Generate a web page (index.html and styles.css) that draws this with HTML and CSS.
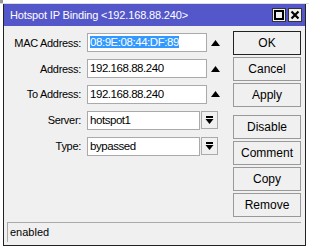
FILE: index.html
```html
<!DOCTYPE html>
<html lang="en">
<head>
    <meta charset="UTF-8">
    <title>Hotspot IP Binding</title>
    <link rel="stylesheet" href="styles.css">
</head>
<body>
    <div class="backdrop"><span class="mark"></span></div>
    <div class="window">
        <div class="titlebar">
            <span class="title">Hotspot IP Binding &lt;192.168.88.240&gt;</span>
            <div class="title-buttons">
                <span class="tbtn">
                    <svg width="10" height="10" viewBox="0 0 10 10"><rect x="1" y="1" width="8" height="8" fill="none" stroke="#000" stroke-width="2"/></svg>
                </span>
                <span class="tbtn">
                    <svg width="10" height="10" viewBox="0 0 10 10"><path d="M1.5 1.5 L8.5 8.5 M8.5 1.5 L1.5 8.5" stroke="#000" stroke-width="2.2"/></svg>
                </span>
            </div>
        </div>
        <div class="content">
            <div class="form">
                <div class="row">
                    <label>MAC Address:</label>
                    <div class="field"><span class="selected">08:9E:08:44:DF:89</span></div>
                    <span class="arrow"><svg width="9" height="6" viewBox="0 0 9 6"><path d="M4.5 0 L9 6 L0 6 Z" fill="#000"/></svg></span>
                </div>
                <div class="row">
                    <label>Address:</label>
                    <div class="field">192.168.88.240</div>
                    <span class="arrow"><svg width="9" height="6" viewBox="0 0 9 6"><path d="M4.5 0 L9 6 L0 6 Z" fill="#000"/></svg></span>
                </div>
                <div class="row">
                    <label>To Address:</label>
                    <div class="field">192.168.88.240</div>
                    <span class="arrow"><svg width="9" height="6" viewBox="0 0 9 6"><path d="M4.5 0 L9 6 L0 6 Z" fill="#000"/></svg></span>
                </div>
                <div class="row">
                    <label>Server:</label>
                    <div class="field short">hotspot1</div>
                    <span class="drop">
                        <svg width="9" height="9" viewBox="0 0 9 9"><rect x="1" y="0" width="7" height="2" fill="#000"/><path d="M0.5 3 L8.5 3 L4.5 8 Z" fill="#000"/></svg>
                    </span>
                </div>
                <div class="row">
                    <label>Type:</label>
                    <div class="field short">bypassed</div>
                    <span class="drop">
                        <svg width="9" height="9" viewBox="0 0 9 9"><rect x="1" y="0" width="7" height="2" fill="#000"/><path d="M0.5 3 L8.5 3 L4.5 8 Z" fill="#000"/></svg>
                    </span>
                </div>
            </div>
            <div class="buttons">
                <button class="default">OK</button>
                <button>Cancel</button>
                <button>Apply</button>
                <button class="gap">Disable</button>
                <button>Comment</button>
                <button>Copy</button>
                <button>Remove</button>
            </div>
        </div>
        <div class="status">enabled</div>
    </div>
</body>
</html>
```

FILE: styles.css
```css
body {
    margin: 0;
    width: 309px;
    height: 248px;
    background: #ffffff;
    font-family: "Liberation Sans", Arial, sans-serif;
    font-size: 11px;
    overflow: hidden;
}
.backdrop {
    height: 3px;
    border-bottom: 1px solid #ddd;
}
.mark {
    display: block;
    width: 3px;
    height: 3px;
    background: #999;
}
.window {
    margin-left: 3px;
    width: 301px;
    height: 241px;
    background: #f0f0f0;
    border: 1px solid #222;
    border-top: none;
    display: flex;
    flex-direction: column;
}
.titlebar {
    height: 22px;
    background: #5457c9;
    display: flex;
    align-items: center;
    justify-content: space-between;
    padding: 0 3px 0 6px;
}
.title {
    color: #ffffff;
    font-size: 11px;
    letter-spacing: -0.15px;
}
.title-buttons {
    display: flex;
    gap: 2px;
}
.tbtn {
    width: 14px;
    height: 14px;
    background: #f0f0f0;
    border: 1px solid #333;
    box-sizing: border-box;
    display: flex;
    align-items: center;
    justify-content: center;
}
.content {
    flex: 1;
    display: flex;
    padding: 5px 4px 0 0;
}
.form {
    flex: 1;
    margin-top: -1px;
}
.row {
    display: flex;
    align-items: center;
    height: 25.8px;
}
.row label {
    width: 77px;
    text-align: right;
    padding-right: 6px;
    color: #000;
    letter-spacing: -0.3px;
}
.field {
    width: 120px;
    height: 19px;
    box-sizing: border-box;
    background: #fff;
    border: 1px solid #aaa;
    padding: 0 2px;
    line-height: 17px;
    font-size: 11.5px;
    letter-spacing: -0.45px;
}
.field.short {
    width: 113px;
}
.selected {
    background: #3399ff;
    color: #fff;
}
.arrow {
    margin-left: 4px;
    display: flex;
    align-items: center;
}
.drop {
    margin-left: 1px;
    width: 17px;
    height: 18px;
    box-sizing: border-box;
    border: 1px solid #aaa;
    background: #f0f0f0;
    display: flex;
    align-items: center;
    justify-content: center;
}
.buttons {
    display: flex;
    flex-direction: column;
    gap: 2px;
    width: 68px;
}
.buttons button {
    height: 24px;
    font-family: "Liberation Sans", Arial, sans-serif;
    font-size: 12px;
    background: #f0f0f0;
    border: 1px solid #999;
    padding: 0;
    color: #000;
}
.buttons button.default {
    border-color: #222;
}
.buttons button.gap {
    margin-top: 6px;
}
.status {
    margin: 5px 4px 3px 3px;
    border-top: 1px solid #aaa;
    border-left: 1px solid #aaa;
    height: 19px;
    line-height: 19px;
    padding-left: 2px;
    font-size: 11px;
    margin-top: auto;
}
```
